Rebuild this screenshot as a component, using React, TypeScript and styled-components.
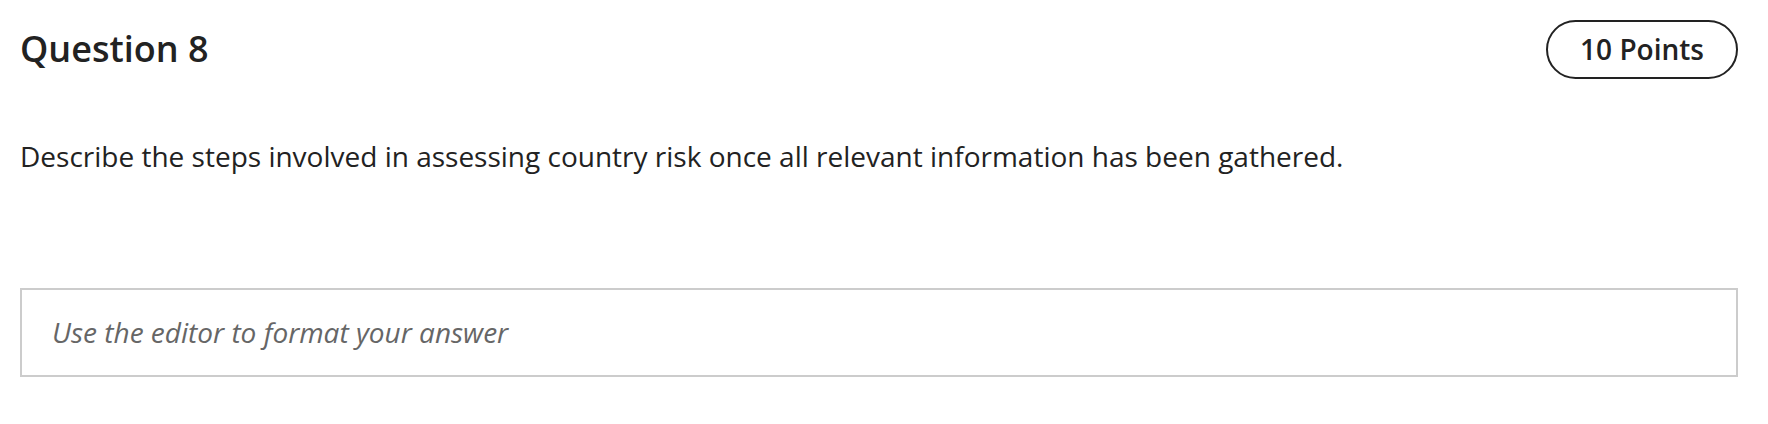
import styled, { createGlobalStyle } from "styled-components";

const COLORS = {
  TEXT: "#222222",
  PLACEHOLDER: "#666666",
  BORDER: "#cccccc",
};

const GlobalStyle = createGlobalStyle`
  body {
    margin: 0;
    background: #ffffff;
    font-family: "Open Sans", "Noto Sans", sans-serif;
    color: ${COLORS.TEXT};
  }
`;

const Page = styled.div`
  padding: 20px 30px 0 20px;
`;

const Header = styled.div`
  display: flex;
  align-items: center;
  justify-content: space-between;
`;

const Title = styled.h2`
  margin: 0;
  font-size: 36px;
  font-weight: 600;
  line-height: 1.4;
`;

const PointsBadge = styled.div`
  border: 2px solid ${COLORS.TEXT};
  border-radius: 9999px;
  padding: 8px 32px;
  font-size: 28px;
  font-weight: 600;
  line-height: 39px;
  white-space: nowrap;
`;

const Prompt = styled.p`
  margin: 56px 0 0;
  font-size: 28px;
  line-height: 42px;
`;

const AnswerEditor = styled.div`
  margin-top: 111px;
  border: 2px solid ${COLORS.BORDER};
  padding: 21px 30px 22px;
  font-size: 28px;
  line-height: 42px;
  font-style: italic;
  color: ${COLORS.PLACEHOLDER};
`;

const App = () => {
  return (
    <>
      <GlobalStyle />
      <Page>
        <Header>
          <Title>Question 8</Title>
          <PointsBadge>10 Points</PointsBadge>
        </Header>
        <Prompt>Describe the steps involved in assessing country risk once all relevant information has been gathered.</Prompt>
        <AnswerEditor>Use the editor to format your answer</AnswerEditor>
      </Page>
    </>
  );
};

export default App;
